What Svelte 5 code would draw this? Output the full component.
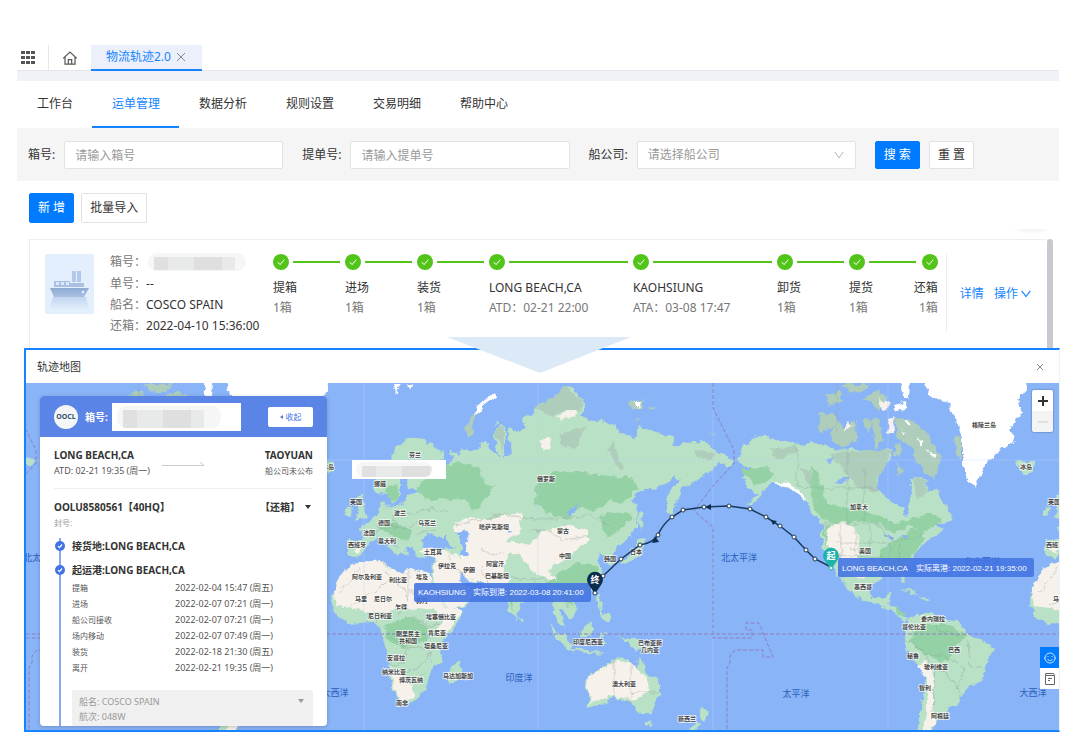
<script>
    const navItems = ["工作台", "运单管理", "数据分析", "规则设置", "交易明细", "帮助中心"]
    let activeNav = "运单管理"

    const steps = [
        { name: "提箱", sub: "1箱" },
        { name: "进场", sub: "1箱" },
        { name: "装货", sub: "1箱" },
        { name: "LONG BEACH,CA", sub: "ATD：02-21 22:00" },
        { name: "KAOHSIUNG", sub: "ATA：03-08 17:47" },
        { name: "卸货", sub: "1箱" },
        { name: "提货", sub: "1箱" },
        { name: "还箱", sub: "1箱" }
    ]

    const events = [
        ["提箱", "2022-02-04 15:47 (周五)"],
        ["进场", "2022-02-07 07:21 (周一)"],
        ["船公司接收", "2022-02-07 07:21 (周一)"],
        ["场内移动", "2022-02-07 07:49 (周一)"],
        ["装货", "2022-02-18 21:30 (周五)"],
        ["离开", "2022-02-21 19:35 (周一)"]
    ]

    // the world repeats every 698 units
    const copies = [-698, 0, 698]

    const places = [
        ["芬兰", 415, 457], ["挪威", 380, 486], ["英国", 356, 504], ["波兰", 400, 515],
        ["德国", 384, 525], ["法国", 369, 535], ["乌克兰", 427, 525], ["意大利", 387, 543],
        ["西班牙", 357, 547], ["土耳其", 433, 554], ["哈萨克斯坦", 494, 529], ["俄罗斯", 546, 481],
        ["蒙古", 563, 533], ["中国", 565, 558], ["韩国", 610, 561], ["日本", 636, 554],
        ["伊拉克", 447, 568], ["伊朗", 469, 572], ["阿富汗", 495, 566], ["巴基斯坦", 497, 578],
        ["阿尔及利亚", 367, 579], ["利比亚", 398, 582], ["埃及", 422, 579], ["马里", 361, 601],
        ["尼日尔", 383, 601], ["乍得", 401, 609], ["苏丹", 422, 603], ["尼日利亚", 380, 618],
        ["埃塞俄比亚", 441, 619], ["刚果民主", 408, 636], ["共和国", 408, 643], ["肯尼亚", 437, 635],
        ["坦桑尼亚", 436, 648], ["安哥拉", 396, 660], ["纳米比亚", 394, 674], ["博茨瓦纳", 411, 682],
        ["马达加斯加", 458, 678], ["南非", 402, 705], ["印度尼西亚", 588, 644], ["巴布亚新", 650, 645],
        ["几内亚", 650, 652], ["澳大利亚", 624, 686], ["新西兰", 687, 721], ["加拿大", 859, 509],
        ["美国", 865, 553], ["墨西哥", 863, 589], ["格陵兰岛", 984, 427], ["冰岛", 1026, 469],
        ["委内瑞拉", 933, 621], ["哥伦比亚", 914, 629], ["巴西", 954, 652], ["秘鲁", 913, 658],
        ["玻利维亚", 936, 669], ["智利", 925, 690], ["阿根廷", 940, 718]
    ]

    const oceans = [
        ["北太平洋", 739, 561], ["太平洋", 796, 697], ["印度洋", 519, 681],
        ["大西洋", 1033, 696], ["北大西洋", 982, 565]
    ]

    // keep the labels that fall on open map, with the one ocean name at the left edge
    const spread = (list, left) => copies
        .flatMap(dx => list.map(([name, x, y]) => ({ name, x: x + dx, y })))
        .filter(l => l.x < 1062 && (l.x > 325 || (l.x > left && l.x < 45)))

    const placeLabels = spread(places, 45)
    const oceanLabels = spread(oceans, 30)

    const route = [
        [603, 576], [621, 559], [640, 545], [658, 535], [672, 517], [683, 510], [704, 507],
        [729, 506], [750, 509], [766, 517], [780, 526], [794, 537], [806, 550], [815, 559]
    ]
</script>

{#snippet tick()}
    <svg viewBox="0 0 16 16" aria-hidden="true">
        <circle cx="8" cy="8" r="8" />
        <path d="M4.8 8.2l2.3 2.4 4.2-5" />
    </svg>
{/snippet}

<main>
    <header class="tabs">
        <button class="apps" aria-label="apps">
            <svg width="14" height="14" viewBox="0 0 14 14">
                {#each [0, 5, 10] as y}
                    {#each [0, 5, 10] as x}
                        <rect {x} {y} width="4" height="3" fill="#555" />
                    {/each}
                {/each}
            </svg>
        </button>
        <button class="home" aria-label="home">
            <svg width="16" height="16" viewBox="0 0 16 16" fill="none" stroke="#555" stroke-width="1.2">
                <path d="M1.2 8.4L8 2l6.8 6.4M3 7v7.2h10V7M6.3 14V9.6h3.4V14" />
            </svg>
        </button>
        <div class="tab">
            <span>物流轨迹2.0</span>
            <button aria-label="close tab">
                <svg width="10" height="10" viewBox="0 0 10 10" stroke="#888" fill="none"><path d="M1 1l8 8M9 1L1 9" /></svg>
            </button>
        </div>
    </header>
    <div class="strip"></div>

    <nav>
        {#each navItems as item}
            <a href="#{item}" class={item === activeNav ? "active" : ""} on:click|preventDefault={() => activeNav = item}>{item}</a>
        {/each}
    </nav>

    <form class="filters" on:submit|preventDefault>
        <div class="field">
            <label for="box">箱号:</label>
            <input id="box" type="text" placeholder="请输入箱号">
        </div>
        <div class="field">
            <label for="bill">提单号:</label>
            <input id="bill" type="text" placeholder="请输入提单号">
        </div>
        <div class="field">
            <label for="carrier">船公司:</label>
            <div class="select">
                <select id="carrier"><option>请选择船公司</option></select>
                <svg width="10" height="8" viewBox="0 0 10 8" fill="none" stroke="#b5b5b5"><path d="M.7.8L5 7 9.300.8" /></svg>
            </div>
        </div>
        <div class="buttons">
            <button class="btn primary">搜 索</button>
            <button class="btn" type="reset">重 置</button>
        </div>
    </form>

    <div class="actions">
        <button class="btn primary">新 增</button>
        <button class="btn">批量导入</button>
    </div>

    <section class="list">
        <article>
            <svg class="ship" viewBox="0 0 49 60" aria-hidden="true">
                <defs>
                    <linearGradient id="hull" x2="0" y2="1"><stop stop-color="#8fabd3" /><stop offset="1" stop-color="#a9c0e2" /></linearGradient>
                    <linearGradient id="wake" x2="0" y2="1"><stop stop-color="#c3d6ef" /><stop offset="1" stop-color="#e3effd" /></linearGradient>
                </defs>
                <rect width="49" height="60" rx="1" fill="#e3effd" />
                <path d="M8 43h33l3 13H4z" fill="url(#wake)" />
                <path d="M27 17h4v11h-4zM32 17h4v11h-4z" fill="#b4c9e8" />
                <path d="M9 27h16v2h14v4H9z" fill="#a9c0e2" />
                <path d="M11 28h3v3h-3zM16 28h3v3h-3zM21 28h3v3h-3z" fill="#dce9fa" />
                <path d="M5 34h39l-5 9H9z" fill="url(#hull)" />
                <circle cx="38" cy="38" r="1.300" fill="#e8f1fd" />
            </svg>
            <dl>
                <div><dt>箱号：</dt><dd><span class="mosaic"></span></dd></div>
                <div><dt>单号：</dt><dd>--</dd></div>
                <div><dt>船名：</dt><dd>COSCO SPAIN</dd></div>
                <div><dt>还箱：</dt><dd>2022-04-10 15:36:00</dd></div>
            </dl>
            <ol class="steps">
                {#each steps as step}
                    <li>
                        <div class="mark">{@render tick()}<i></i></div>
                        <strong>{step.name}</strong>
                        <span>{step.sub}</span>
                    </li>
                {/each}
            </ol>
            <div class="links">
                <a href="#detail">详情</a>
                <a href="#more">操作 <svg width="10" height="8" viewBox="0 0 10 8" fill="none" stroke="#1684ff" stroke-width="1.200"><path d="M.7.8L5 6.500 9.300.8" /></svg></a>
            </div>
        </article>
        <div class="scroll"></div>
        <div class="shade"></div>
    </section>

    <section class="modal">
        <svg class="pointer" width="184" height="36" viewBox="0 0 184 36" aria-hidden="true"><path d="M0 0h184L93 36z" fill="#dce9f6" /></svg>
        <div class="title">
            <h2>轨迹地图</h2>
            <button aria-label="close">
                <svg width="8" height="8" viewBox="0 0 8 8" stroke="#888"><path d="M1 1l6 6M7 1L1 7" /></svg>
            </button>
        </div>

        <div class="map">
            <svg class="world" viewBox="26 383 1033 347" preserveAspectRatio="xMidYMid slice">
                <defs>
                    <filter id="rough" x="0" y="0" width="100%" height="100%">
                        <feTurbulence type="fractalNoise" baseFrequency="0.13" numOctaves="3" seed="4" />
                        <feDisplacementMap in="SourceGraphic" scale="8" xChannelSelector="R" yChannelSelector="G" />
                    </filter>
                    <g id="land">
                        <g fill="#b9e1c5">
                            <!-- Europe and Asia -->
                            <path d="M373 487L375 479 392 460 395 448 408 438 420 437 427 442 443 452 444 459 434 462 446 466 453 459 450 449 457 455 463 450 480 448 483 443 493 448 500 460 494 437 498 423 505 425 505 452 503 461 511 454 507 433 510 427 516 432 525 428 522 419 532 415 533 407 553 397 565 387 574 390 583 400 585 408 580 417 593 420 615 425 620 435 635 437 638 427 650 430 672 437 675 447 683 443 703 442 720 452 733 461 729 467 717 461 712 470 700 480 683 487 677 500 672 518 667 510 667 495 680 480 675 477 667 483 650 490 640 490 632 500 638 510 637 527 627 540 618 547 613 553 616 560 612 568 607 557 600 553 597 559 604 573 598 587 583 595 574 600 577 609 568 618 564 610 559 608 565 628 560 626 554 613 553 600 547 587 540 584 530 593 521 604 517 619 510 611 507 600 502 591 490 585 470 581 458 571 463 586 473 586 477 593 467 606 448 612 437 592 432 578 433 558 417 556 412 547 406 548 408 556 400 550 393 541 388 539 402 552 396 557 390 549 380 538 370 540 366 549 357 559 347 555 347 540 362 540 363 533 357 527 370 522 380 513 382 500 386 508 403 505 407 497 423 490 408 488 407 480 417 470 410 466 400 480 400 493 392 505 388 493 377 495Z" />
                            <!-- Africa -->
                            <path d="M352 563L383 560 387 567 403 573 408 568 430 573 436 590 445 608 450 614 463 612 457 626 440 644 443 660 430 672 427 685 417 700 402 706 396 697 388 673 389 657 382 637 382 628 370 622 350 624 337 616 332 605 333 590 340 577Z" />
                            <path d="M460 659L462 668 455 683 449 683 450 669ZM356 496L361 494 364 510 367 518 355 520 360 511ZM348 507L353 506 351 515 345 516ZM639 511L643 513 642 530 638 524ZM636 541L646 538 643 549 637 559 622 564 621 560 632 556 636 549ZM599 594L601 597 599 602 596 599ZM598 601L603 602 602 611 607 622 601 617ZM519 618L523 620 521 624Z" />
                            <path d="M549 623L557 630 573 645 570 650 556 637ZM577 632L591 621 595 628 591 637 579 637ZM599 633L607 632 602 638 605 645 600 644ZM571 648L594 651 608 653 594 654 573 651ZM617 635L627 639 637 639 650 648 657 655 642 650 635 652 629 644ZM603 614L609 614 609 622 603 619Z" />
                            <!-- Australia and New Zealand -->
                            <path d="M585 678L603 667 615 658 628 657 629 665 637 669 640 655 645 670 660 683 660 695 652 713 640 713 630 702 613 698 600 705 589 707 588 693ZM645 721L651 721 649 727 646 726ZM701 706L709 714 703 722 700 715ZM698 721L700 725 691 733 686 733Z" />
                            <!-- North America -->
                            <path d="M738 461L742 448 758 435 778 440 797 445 813 441 830 448 843 450 857 448 867 452 890 447 892 460 882 470 878 487 885 497 902 507 907 517 910 503 910 477 925 480 928 492 937 487 943 503 953 513 950 522 933 525 944 531 927 540 917 550 913 560 902 571 906 583 902 582 898 574 882 576 872 583 868 588 873 599 882 599 892 592 888 603 900 610 902 617 910 619 906 622 893 613 880 605 860 599 850 590 838 572 848 590 842 583 833 568 822 549 822 523 810 513 807 502 793 490 773 483 763 490 757 500 745 507 757 495 747 487 742 477 750 468Z" />
                            <path d="M900 588L912 590 920 596 906 591ZM920 597L930 599 924 601Z" />
                            <!-- South America -->
                            <path d="M910 618L925 612 943 617 962 625 965 635 983 640 993 648 985 667 983 681 967 688 957 705 950 707 947 717 935 723 933 733 918 733 922 707 925 677 917 665 905 647 905 635Z" />
                            <path d="M1016 461L1034 462 1034 471 1022 474Z" />
                        </g>
                        <!-- tundra and arctic islands -->
                        <g fill="#afcdbb">
                            <path d="M533 407L553 397 565 387 582 400 580 412 565 410 553 418ZM495 437L498 424 504 426 504 450ZM466 432L472 414 478 412 471 425 473 437 468 437ZM832 453L890 448 890 460 878 478 878 492 860 489 848 475 838 465ZM912 478L925 481 927 493 917 499ZM820 414L833 413 837 423 825 433 818 428ZM829 434L838 420 846 430 855 420 856 440 842 449ZM826 395L840 390 842 404 828 405ZM862 398L878 390 886 399 880 411ZM842 384L869 384 863 393 849 391ZM872 421L878 416 882 440 875 450ZM896 418L911 420 927 433 942 458 934 479 917 463 911 447 898 438ZM866 418L872 420 869 432 864 427ZM894 444L902 443 901 455 894 458ZM897 463L905 472 897 474Z" />
                            <path d="M630 402L642 400 644 407 632 410ZM648 406L656 408 651 410ZM636 418L642 419 638 421ZM710 434L717 433 715 436ZM955 435L963 440 960 460 954 445ZM612 440L618 455 624 470 615 466 609 450ZM695 450L717 454 713 461 695 456ZM770 450L795 446 800 451 775 460ZM800 468L815 475 825 495 812 490ZM560 435L585 426 578 447 560 445Z" />
                        </g>
                        <!-- forest -->
                        <g fill="#94d2a6">
                            <path d="M417 486L433 468 455 462 480 466 484 482 493 487 482 502 474 513 466 500 446 499 425 500ZM537 481L560 470 600 475 632 478 638 488 622 505 610 500 595 511 580 507 567 519 545 514 535 500ZM386 490L397 482 398 495 391 503ZM577 563L597 566 601 576 596 586 577 593 560 590 546 583ZM375 526L393 523 410 528 411 541 394 537ZM600 515L615 512 632 515 622 529 606 537ZM505 590L513 593 514 612ZM562 592L572 594 573 610Z" />
                            <path d="M811 466L821 480 825 502 843 508 860 507 882 518 898 523 930 513 944 520 922 533 912 525 892 533 880 524 858 521 836 524 820 519 812 504ZM914 528L926 534 907 565 884 573 881 550ZM823 525L830 525 829 541 825 545ZM915 625L950 625 966 636 955 650 942 663 925 655 911 643ZM384 626L410 617 430 627 426 642 403 648 388 640ZM895 605L908 617 897 615ZM742 470L768 466 773 476 755 486Z" />
                        </g>
                        <!-- deserts -->
                        <g fill="#f6f1ea">
                            <path d="M352 563L383 560 387 567 403 573 408 568 430 573 436 590 446 608 462 612 455 622 440 638 433 630 443 622 430 608 420 610 405 606 385 612 360 609 336 606 333 590 340 577ZM388 666L399 672 412 681 414 695 403 704 397 697Z" />
                            <path d="M451 526L466 518 488 519 503 515 522 513 520 532 506 541 529 545 543 531 562 526 587 529 590 540 576 551 565 560 550 568 555 580 545 577 530 570 520 555 509 553 502 570 508 580 502 589 488 584 469 580 459 572 464 586 476 588 466 605 448 611 438 592 433 575 435 558 420 552 425 547 445 550 460 558 465 545 457 535Z" />
                            <path d="M586 678L603 668 616 661 628 662 638 672 647 677 650 690 641 698 630 700 613 697 601 700 591 702 589 691ZM826 528L836 524 846 522 857 530 860 545 858 559 868 575 858 579 845 571 835 556 828 545ZM925 660L932 669 934 683 932 700 935 721 931 733 923 733 928 707 927 682 918 667ZM843 431L848 421 853 426ZM887 420L894 417 895 432 888 433ZM878 397L885 402 892 404 885 411ZM541 440L551 437 550 448 545 450ZM558 417L567 410 577 410 575 416 560 421ZM353 548L362 547 358 555Z" />
                        </g>
                        <!-- ice -->
                        <g fill="#fff">
                            <path d="M923 376L928 395 947 402 953 413 963 440 963 470 975 489 983 467 1000 450 1015 442 1010 430 1022 413 1018 400 1026 390 1023 376ZM473 414L478 405 494 393 497 396 484 405 476 414ZM893 405L905 402 906 408 896 412ZM902 383L910 383 909 398 903 397ZM393 384L401 384 396 394ZM407 384L412 384 410 389ZM772 482L788 483 803 494 808 502 793 490ZM916 438L923 442 921 446ZM928 450L936 456 933 458ZM905 419L911 424 907 424ZM902 431L907 434 903 435ZM635 401L641 401 639 408Z" />
                        </g>
                        <!-- inland water -->
                        <g fill="#8ab4f8">
                            <path d="M421 541L427 534 439 538 447 534 446 542 456 549 440 548 425 549ZM456 533L467 531 470 536 464 541 469 555 460 555 462 545ZM567 514L578 502 576 510 570 516ZM883 533L896 537 893 541ZM899 537L909 535 904 540ZM825 460L835 456 830 465ZM834 483L850 475 843 484ZM506 532L516 531 509 534ZM426 635L430 634 429 639ZM431 655L433 664 430 659Z" />
                        </g>
                        <g class="borders">
                            <path d="M822 524H878L886 535 898 541 926 535M847 450V524M864 468V524M797 445V486L812 488H878M837 383V432M614 660V698M631 665V705M631 692H659" />
                            <path d="M360 567L352 578 340 592M384 562L389 578 378 591 351 606M408 570V602M389 580L405 588 408 602 398 614M431 592H409M384 610L376 623M414 618L430 626 440 623M390 637L407 648 420 647 431 652M407 648L404 663 390 664M431 652L418 669 402 672M413 681L425 672M418 633L426 645M905 640L923 649 928 662 942 672 954 681 961 699M933 617L938 630 960 634M926 655L944 655 965 668 957 690M935 669L932 712M968 640L970 665 983 667M400 510L415 514 431 508 448 513M373 533L388 526 404 529 418 523M391 514L398 525M416 532L437 530M455 525L480 520 500 514 535 519 560 519 590 515 614 529M529 531L546 530 563 540 590 536M448 552L454 568 465 576M481 548L493 556 505 551M480 566L488 584M505 576L527 579 543 579 552 584M562 590L570 608M850 546L870 556 884 573M856 530V554M870 526V551M889 544V567M900 543L899 568M841 525V562M836 543H887M836 555L884 558" />
                        </g>
                    </g>
                </defs>
                <rect x="26" y="383" width="1033" height="350" fill="#8ab4f8" />
                <g filter="url(#rough)">
                    {#each copies as x}
                        <use href="#land" {x} />
                    {/each}
                </g>
                <path d="M364 383V733M538 383V733M713 383V733M888 383V733M26 460H1059" stroke="#b9cffb" stroke-opacity=".35" />
                <g class="frontier">
                    <path d="M26 634H1059" />
                    {#each copies as x}
                        <path transform="translate({x})" d="M713 383V408L734 450V463L712 487 694 511 713 527V638H752V630H746V623H759L773 657H763V650H735L730 656 730 663 727 668V733" />
                    {/each}
                </g>

                {#each placeLabels as label}
                    <text class="place" x={label.x} y={label.y}>{label.name}</text>
                {/each}
                {#each oceanLabels as label}
                    <text class="ocean" x={label.x} y={label.y}>{label.name}</text>
                {/each}

                <path class="route" d="M595 592Q598 582 603 576L621 559 640 545Q653 543 658 535 662 525 672 517L683 510 704 507 729 506 750 509 766 517 780 526 794 537 806 550 815 559 831 567" />
                <path d="M705 507l6-3v6zM652 543l3-7 4 6zM771 520l6 1-4 4z" fill="#0c2d4d" />
                {#each route as [cx, cy]}
                    <circle class="stop" {cx} {cy} r="2" />
                {/each}

                <rect x="414" y="583" width="177" height="19" rx="2" class="tip" />
                <text class="tiptext" x="418" y="595">KAOHSIUNG</text>
                <text class="tiptext" x="473" y="595">实际到港: 2022-03-08 20:41:00</text>
                <rect x="838" y="558" width="196" height="19" rx="2" class="tip" />
                <text class="tiptext" x="842" y="571">LONG BEACH,CA</text>
                <text class="tiptext" x="916" y="571">实际离港: 2022-02-21 19:35:00</text>

                <path d="M595 594L589 585A8 8 0 1 1 601 585Z" fill="#0c2d4d" />
                <circle class="stop" cx="595" cy="593" r="2" />
                <text class="pin" x="595" y="583">终</text>
                <path d="M831 569L825 561A8 8 0 1 1 837 561Z" fill="#20b3ab" />
                <circle cx="831" cy="568" r="2" fill="#d7f7ee" stroke="#20b3ab" />
                <text class="pin" x="831" y="559">起</text>
            </svg>

            <div class="redacted"><span class="mosaic"></span></div>

            <aside>
                <div class="head">
                    <span class="logo">OOCL</span>
                    <b>箱号:</b>
                    <span class="redact"><span class="mosaic"></span></span>
                    <button><i></i>收起</button>
                </div>
                <div class="voyage">
                    <div>
                        <b>LONG BEACH,CA</b>
                        <span>ATD: 02-21 19:35 (周一)</span>
                    </div>
                    <svg width="42" height="5" viewBox="0 0 42 5" fill="none" stroke="#ccc"><path d="M0 4.500H42L38 1" /></svg>
                    <div class="to">
                        <b>TAOYUAN</b>
                        <span>船公司未公布</span>
                    </div>
                </div>
                <div class="box">
                    <b>OOLU8580561【40HQ】</b>
                    <b class="state">【还箱】<i class="down"></i></b>
                    <small>封号:</small>
                </div>
                <div class="timeline">
                    <h3>{@render tick()}接货地:LONG BEACH,CA</h3>
                    <h3>{@render tick()}起运港:LONG BEACH,CA</h3>
                    <table>
                        <tbody>
                            {#each events as [name, time]}
                                <tr><td>{name}</td><td>{time}</td></tr>
                            {/each}
                        </tbody>
                    </table>
                    <div class="vessel">
                        <p>船名: COSCO SPAIN<i class="down"></i></p>
                        <p>航次: 048W</p>
                    </div>
                </div>
            </aside>

            <div class="zoom">
                <button aria-label="zoom in"><svg width="10" height="10" viewBox="0 0 10 10" stroke="#333" stroke-width="2"><path d="M5 0v10M0 5h10" /></svg></button>
                <button aria-label="zoom out" disabled><svg width="10" height="10" viewBox="0 0 10 10" stroke="#ccc"><path d="M0 5h10" /></svg></button>
            </div>

            <div class="float">
                <button class="chat" aria-label="support">
                    <svg width="12" height="12" viewBox="0 0 12 12" fill="none" stroke="#cfe5ff"><circle cx="6" cy="6" r="5" /><path d="M3.500 7c1 2 4 2 5 0M4 4v1M8 4v1M0 5v2M12 5v2" /></svg>
                </button>
                <button aria-label="notes">
                    <svg width="10" height="12" viewBox="0 0 10 12" fill="none" stroke="#666"><path d="M.500 2.500V.500h8l1 2v9h-9v-9h9M3 5.500h4M3 7.500h2" /></svg>
                </button>
            </div>
        </div>
    </section>
</main>

<style>
    :global(body) {
        background: #fff;
    }

    main {
        padding: 45px 21px 0 17px;
        font-family: "Noto Sans", "Noto Sans CJK SC", sans-serif;
        font-size: 12px;
        line-height: 20px;
        color: #333;
    }

    button, input, select {
        font: inherit;
        color: inherit;
        box-sizing: border-box;
    }

    button {
        display: flex;
        align-items: center;
        justify-content: center;
        padding: 0;
        border: none;
        background: none;
        cursor: pointer;
    }

    a {
        color: inherit;
        text-decoration: none;
    }

    .tabs {
        display: flex;
        height: 25px;
        border-bottom: 1px solid #e4e6ea;
    }

    .apps {
        width: 32px;
        padding-right: 10px;
        border-right: 1px solid #e8e8e8;
    }

    .home {
        width: 42px;
    }

    .tab {
        display: flex;
        align-items: center;
        gap: 5px;
        height: 24px;
        padding: 0 16px 0 15px;
        background: #ebf0fb;
        border-bottom: 2px solid #1684ff;
        color: #1684ff;
    }

    .strip {
        height: 10px;
        background: #f0f2f7;
    }

    nav {
        display: flex;
        height: 47px;
    }

    nav a {
        padding: 0 19px 0 20px;
        line-height: 45px;
        border-bottom: 2px solid transparent;
    }

    nav .active {
        color: #1684ff;
        border-color: #1684ff;
    }

    .filters {
        display: flex;
        gap: 19px;
        padding: 13px 85px 12px 11px;
        background: #f5f5f5;
    }

    .field {
        display: flex;
        flex: 1 1 auto;
        align-items: center;
        gap: 9px;
    }

    .field input, .select {
        flex: 1 1 100px;
        width: 100px;
        min-width: 0;
    }

    .field input, select {
        height: 28px;
        padding: 0 10px;
        border: 1px solid #e2e2e2;
        border-radius: 2px;
        background: #fff;
    }

    .field input::placeholder, select {
        color: #999;
        opacity: 1;
    }

    .select {
        position: relative;
    }

    select {
        display: block;
        width: 100%;
        appearance: none;
    }

    .select svg {
        position: absolute;
        right: 12px;
        top: 10px;
    }

    .buttons, .actions {
        display: flex;
        gap: 9px;
    }

    .btn {
        height: 28px;
        padding: 0 8px;
        border: 1px solid #e2e2e2;
        border-radius: 2px;
        background: #fff;
        white-space: nowrap;
    }

    .primary {
        background: #007bff;
        border-color: #007bff;
        color: #fff;
    }

    .actions {
        gap: 7px;
        padding: 12px;
    }

    .actions .btn {
        height: 30px;
    }

    .list {
        position: relative;
        display: flex;
        margin: 4px 6px 0 12px;
    }

    article {
        display: flex;
        flex: 1;
        height: 109px;
        box-sizing: border-box;
        padding: 14px 0 0 15px;
        border: 1px solid #eee;
        border-width: 1px 0 0 1px;
    }

    .ship {
        width: 49px;
        height: 60px;
    }

    dl {
        width: 163px;
        margin: -3px 0 0 16px;
    }

    dl div {
        display: flex;
        line-height: 21px;
    }

    dt {
        color: #777;
    }

    dd {
        margin: 0;
        white-space: nowrap;
    }

    .mosaic {
        display: block;
        width: 98px;
        height: 18px;
        margin: 2px;
        border-radius: 9px;
        background: linear-gradient(90deg, transparent 6px, #e0e0e0 6px 20px, #e8eae9 20px 46px, #dfdfdf 46px 74px, #e8eae9 74px 87px, transparent 87px) 0 4px / 100% 13px no-repeat #f6f6f6;
    }

    .steps {
        display: grid;
        flex: 1;
        grid-template-columns: 72fr 72fr 72fr 144fr 144fr 72fr 72fr 17fr;
        margin: 0 8px 0 0;
        padding: 0;
        list-style: none;
    }

    .steps li {
        min-width: 0;
        white-space: nowrap;
    }

    .mark {
        display: flex;
        align-items: center;
        height: 16px;
        margin-bottom: 8px;
    }

    .mark svg {
        width: 16px;
        height: 16px;
        fill: #52c41a;
    }

    .mark path, h3 path {
        fill: none;
        stroke: #fff;
        stroke-width: 1;
    }

    .mark i {
        flex: 1;
        height: 2px;
        margin: 0 5px 0 4px;
        background: #52c41a;
    }

    .steps strong, .steps span {
        display: block;
        font-weight: 400;
    }

    .steps span {
        color: #777;
    }

    .steps li:last-child {
        display: flex;
        flex-direction: column;
        align-items: flex-end;
    }

    .steps li:last-child i {
        display: none;
    }

    .links {
        display: flex;
        align-items: center;
        gap: 10px;
        height: 79px;
        padding: 0 16px 0 13px;
        border-left: 1px solid #eee;
        color: #1684ff;
        white-space: nowrap;
    }

    .scroll {
        width: 6px;
        border-radius: 3px 3px 0 0;
        background: #c7c9cf;
    }

    .shade {
        position: absolute;
        top: -10px;
        right: 0;
        width: 42px;
        height: 5px;
        background: radial-gradient(ellipse at top, #eee, transparent 70%);
    }

    .modal {
        position: relative;
        margin: 0 -1px 0 7px;
        border: 2px solid #1684ff;
        border-right: 1px solid #f0f2fa;
        background: #fff;
    }

    .pointer {
        position: absolute;
        left: calc(50% - 96px);
        top: -13px;
    }

    .title {
        display: flex;
        align-items: center;
        justify-content: space-between;
        height: 33px;
        padding: 0 15px 0 11px;
    }

    h2 {
        margin: 0;
        font-size: 11px;
        font-weight: 400;
    }

    .map {
        position: relative;
        overflow: hidden;
    }

    .world {
        display: block;
        width: 100%;
        font-family: "Liberation Sans", "Noto Sans CJK SC", sans-serif;
    }

    .borders path {
        fill: none;
        stroke: #87958d;
        stroke-width: 0.6;
        opacity: 0.6;
    }

    .frontier path {
        fill: none;
        stroke: #8d7fbd;
        stroke-dasharray: 4 2;
    }

    .place {
        font-size: 6px;
        font-weight: 700;
        fill: #444;
        stroke: #fff;
        stroke-width: 1.5;
        stroke-opacity: 0.8;
        paint-order: stroke;
        text-anchor: middle;
    }

    .ocean {
        font-size: 9px;
        fill: #2860b8;
        text-anchor: middle;
    }

    .route {
        fill: none;
        stroke: #173a5c;
        stroke-width: 1.5;
    }

    .stop {
        fill: #fff;
        stroke: #25384c;
    }

    .tip {
        fill: #4474e2;
        fill-opacity: 0.9;
    }

    .tiptext {
        font-size: 8px;
        fill: #fff;
    }

    .pin {
        font-size: 9px;
        font-weight: 700;
        fill: #fff;
        text-anchor: middle;
    }

    .redacted {
        position: absolute;
        left: 326px;
        top: 77px;
        width: 94px;
        height: 19px;
        background: #fff;
    }

    .redacted .mosaic {
        width: 76px;
        height: 15px;
        margin: 2px 4px;
    }

    aside {
        position: absolute;
        left: 14px;
        top: 13px;
        bottom: 4px;
        width: 287px;
        border-radius: 4px;
        overflow: hidden;
        background: #fff;
        font-size: 9px;
        line-height: 16px;
        box-shadow: 0 1px 4px rgba(0, 0, 0, 0.2);
    }

    .head {
        display: flex;
        align-items: center;
        height: 41px;
        padding: 0 14px;
        background: #5a84e5;
        color: #fff;
    }

    .logo {
        width: 24px;
        margin-right: 7px;
        border-radius: 50%;
        background: #f4f6f8;
        color: #33506b;
        font-size: 7px;
        font-weight: 700;
        line-height: 24px;
        text-align: center;
    }

    .redact {
        width: 129px;
        height: 28px;
        margin-left: 4px;
        background: #fff;
    }

    .redact .mosaic {
        width: 104px;
        height: 22px;
        margin: 3px 5px;
        background-size: 100% 18px;
    }

    .head button {
        width: 45px;
        height: 20px;
        margin-left: auto;
        gap: 3px;
        border-radius: 2px;
        background: #fff;
        color: #4676e8;
        font-size: 8px;
    }

    .head i {
        border: 2px solid transparent;
        border-right: 3px solid #4676e8;
        border-left: 0;
    }

    .voyage {
        display: flex;
        justify-content: space-between;
        align-items: center;
        margin: 0 14px;
        padding: 10px 0 9px;
        border-bottom: 1px solid #f0f0f0;
    }

    .voyage svg {
        margin: 0 auto 0 12px;
    }

    aside b {
        display: block;
        font-size: 10px;
        white-space: nowrap;
    }

    .voyage span {
        display: block;
        color: #555;
    }

    .to {
        text-align: right;
    }

    .voyage .to span {
        font-size: 8px;
    }

    .box {
        display: flex;
        flex-wrap: wrap;
        justify-content: space-between;
        margin: 0 14px;
        padding: 10px 0 15px;
    }

    .box small {
        width: 100%;
        font-size: 8px;
        color: #999;
    }

    .down {
        display: inline-block;
        margin: 0 2px 2px 5px;
        border: 3px solid transparent;
        border-top: 4px solid currentColor;
        border-bottom: 0;
    }

    .timeline {
        margin: 0 14px 0 19px;
        padding-left: 11px;
        border-left: 2px solid #8aa8f0;
    }

    h3 {
        position: relative;
        margin: 0;
        padding-bottom: 8px;
        font-size: 10px;
        line-height: 16px;
    }

    h3:first-child {
        margin-top: -8px;
    }

    h3 + h3 {
        padding-bottom: 2px;
    }

    h3 :global(svg) {
        position: absolute;
        left: -17px;
        top: 3px;
        width: 10px;
        height: 10px;
        fill: #4272e6;
    }

    h3 path {
        stroke-width: 2;
    }

    table {
        width: 100%;
        border-collapse: collapse;
    }

    td {
        padding: 0;
        line-height: 16px;
        color: #555;
    }

    td:first-child {
        width: 103px;
        font-size: 8px;
    }

    .vessel {
        margin-top: 14px;
        padding: 4px 7px;
        border-radius: 2px;
        background: #f0f0f0;
        color: #999;
    }

    .vessel p {
        display: flex;
        align-items: center;
        justify-content: space-between;
        margin: 0;
        line-height: 15px;
    }

    .zoom {
        position: absolute;
        right: 6px;
        top: 7px;
        border-radius: 2px;
        overflow: hidden;
        box-shadow: 0 0 2px rgba(0, 0, 0, 0.5);
    }

    .zoom button, .float button {
        width: 21px;
        height: 21px;
        background: #fff;
    }

    .zoom button:disabled {
        background: #f4f4f4;
    }

    .float {
        position: absolute;
        right: 0;
        top: 264px;
    }

    .float button {
        width: 19px;
    }

    .float .chat {
        background: #007bff;
    }
</style>
